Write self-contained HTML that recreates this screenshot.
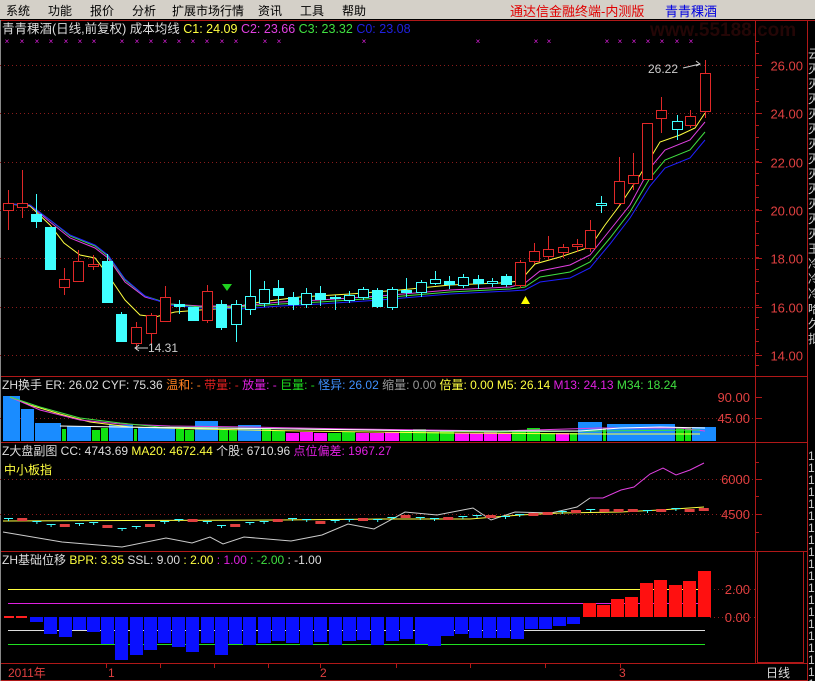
<!DOCTYPE html>
<html><head><meta charset="utf-8">
<style>
html,body{margin:0;padding:0;background:#000;width:815px;height:681px;overflow:hidden}
#menu{position:absolute;left:0;top:0;width:815px;height:19px;background:#d4d0c8;font:12px "Liberation Sans","Noto Sans CJK SC",sans-serif;color:#000}
#menu span{position:absolute;top:2px}
svg{position:absolute;left:0;top:0}
</style></head><body>
<div id="menu">
<span style="left:6px">系统</span><span style="left:48px">功能</span><span style="left:90px">报价</span><span style="left:132px">分析</span><span style="left:172px">扩展市场行情</span><span style="left:258px">资讯</span><span style="left:300px">工具</span><span style="left:342px">帮助</span>
<span style="left:510px;color:#e00000;font-size:13px;top:1px">通达信金融终端-内测版</span><span style="left:665px;color:#0000e0;font-size:13px;top:1px">青青稞酒</span>
</div>
<svg id="s" width="815" height="681" xmlns="http://www.w3.org/2000/svg" font-family="Liberation Sans, Noto Sans CJK SC, sans-serif" font-size="12">
<rect x="0" y="19" width="815" height="662" fill="#000"/>
<text x="650" y="36" fill="#5a1010" font-size="19" font-weight="bold" opacity="0.4">www.55188.com</text>
<g id="g"></g>
</svg>
<script>
var o='';
function L(x1,y1,x2,y2,c,d){o+='<line x1="'+x1+'" y1="'+y1+'" x2="'+x2+'" y2="'+y2+'" stroke="'+c+'"'+(d?' stroke-dasharray="'+d+'"':'')+'/>';}
function R(x,y,w,h,f,s){o+='<rect x="'+x+'" y="'+y+'" width="'+w+'" height="'+h+'" fill="'+f+'"'+(s?' stroke="'+s+'"':'')+'/>';}
function T(x,y,t,c,a,fs){o+='<text x="'+x+'" y="'+y+'" fill="'+c+'"'+(a?' text-anchor="'+a+'"':'')+(fs?' font-size="'+fs+'"':'')+'>'+t+'</text>';}
function P(pts,c){o+='<polyline fill="none" stroke="'+c+'" points="'+pts+'"/>';}
var red='#b01818';
L(0,20.5,815,20.5,red);L(755.5,20,755.5,663,red);L(807.5,20,807.5,681,red);
L(0,376.5,807,376.5,red);L(0,442.5,807,442.5,red);L(0,551.5,807,551.5,red);L(0,663.5,807,663.5,red);L(0,680.5,807,680.5,red);
L(0.5,20,0.5,681,'#888');
var prices=[26,24,22,20,18,16,14];
prices.forEach(function(p){var y=Math.round(65+(26-p)*24.15)+.5;L(0,y,755,y,'#8a1c1c','1 3');L(755,y,762,y,red);T(803,y+5,p.toFixed(2),'#e04040','end',13);});
for(var y=41;y<376;y+=12){L(755,y+.5,759,y+.5,red);}
var rc='云灭灭灭灭灭灭灭灭灭灭灭灭王冷冷冷哈久扣';for(var i=0;i<rc.length;i++)T(808,58+i*15,rc[i],'#ccc',null,12);
for(var i=0;i<20;i++)T(808,460+i*12,'1','#ccc',null,12);
o+='<text x="2" y="33" font-size="12.5"><tspan fill="#ddd">青青稞酒(日线,前复权) 成本均线 </tspan><tspan fill="#ffff40">C1: 24.09 </tspan><tspan fill="#e040e0">C2: 23.66 </tspan><tspan fill="#40e040">C3: 23.32 </tspan><tspan fill="#2020e0">C0: 23.08</tspan></text>';
[7,22,37,51,66,80,94,122,137,151,165,179,193,207,222,236,265,279,364,478,536,549,607,620,634,648,662,677,691].forEach(function(x){o+='<text x="'+x+'" y="44" fill="#e020e0" font-size="8" text-anchor="middle">×</text>';});
P('8,204 30,206 50,225 64,243 80,255 95,258 108,275 125,300 140,315 155,317 175,312 200,310 230,308 260,302 300,297 350,294 400,290 450,285 500,283 520,281 535,264 560,257 590,247 605,225 620,205 640,175 660,142 680,135 695,128 705,113','#ffff40');
P('8,204 30,205 50,222 70,238 95,248 108,258 125,282 145,297 170,304 200,306 240,306 280,302 320,300 380,296 450,290 510,287 525,283 540,271 570,265 590,255 610,230 630,205 650,168 665,150 690,140 705,122','#e040e0');
P('8,204 30,205 50,220 70,236 95,246 108,256 125,280 145,296 170,304 200,307 240,307 280,304 320,302 380,298 450,292 510,289 525,287 540,277 570,272 590,262 610,238 630,212 650,178 665,160 690,150 705,132','#40e040');
P('8,204 30,205 50,220 70,235 95,245 108,255 125,279 145,296 170,305 200,308 240,309 280,306 320,304 380,300 450,294 510,291 525,290 540,282 570,278 590,268 610,244 630,218 650,186 665,168 690,158 705,140','#2020ff');
var C=[[8,203,210,190,230,'r'],[22,203,207,170,218,'r'],[36,214,222,194,228,'c'],[50,227,270,227,270,'c'],[64,279,287,268,295,'r'],[78,261,281,250,281,'r'],[93,264,266,255,270,'r'],[107,261,303,254,303,'c'],[121,314,342,312,342,'c'],[136,327,343,322,350,'r'],[151,315,333,313,345,'r'],[165,297,321,286,322,'r'],[179,304,307,300,314,'c'],[193,307,321,307,321,'c'],[207,291,320,285,323,'r'],[221,304,328,300,330,'c'],[236,304,324,300,342,'h'],[250,296,309,270,315,'h'],[264,289,303,281,307,'h'],[278,288,296,280,305,'c'],[293,297,305,292,310,'c'],[306,293,304,288,308,'h'],[320,293,300,286,306,'c'],[335,297,299,295,310,'c'],[349,295,300,291,303,'h'],[363,289,297,287,300,'h'],[377,290,307,288,308,'c'],[392,289,307,287,310,'h'],[406,290,293,278,297,'c'],[421,282,292,280,297,'h'],[435,279,283,271,285,'h'],[449,281,285,276,289,'c'],[463,277,285,274,288,'h'],[478,279,284,275,289,'c'],[492,281,283,278,287,'h'],[506,276,285,274,287,'c'],[520,262,285,260,288,'r'],[534,251,261,243,264,'r'],[548,249,256,236,260,'r'],[563,247,252,244,258,'r'],[577,244,246,239,252,'r'],[590,230,248,220,252,'r'],[601,203,205,196,213,'h'],[619,181,203,157,205,'r'],[633,175,183,153,190,'r'],[647,123,179,123,179,'r'],[661,110,118,97,133,'r'],[677,121,129,115,140,'h'],[690,116,125,110,128,'r'],[705,73,111,60,118,'r']];
C.forEach(function(c){var x=c[0],col=c[5]=='r'?'#e02828':'#40ffff';L(x+.5,c[3],x+.5,c[4],col);var h=Math.max(1,c[2]-c[1]);
 if(c[5]=='c')R(x-5,c[1],11,h,'#40ffff');else R(x-5+.5,c[1]+.5,10,h,'#000',col);});
T(648,73,'26.22','#ccc',null,12);P('683,68 700,64','#ccc');P('696,61 700,64 696,66','#ccc');
T(148,352,'14.31','#ccc',null,12);P('135,348 148,348','#ccc');P('139,345 135,348 139,351','#ccc');
o+='<polygon points="222,284 232,284 227,291" fill="#20d020"/><polygon points="521,304 530,304 525.5,296" fill="#ffff00"/>';
o+='<text x="2" y="389" font-size="12"><tspan fill="#ddd">ZH换手 ER: 26.02 CYF: 75.36 </tspan><tspan fill="#ff8020">温和: - </tspan><tspan fill="#e02020">带量: - </tspan><tspan fill="#e020e0">放量: - </tspan><tspan fill="#20e020">巨量: - </tspan><tspan fill="#4090ff">怪异: 26.02 </tspan><tspan fill="#999">缩量: 0.00 </tspan><tspan fill="#ffff40">倍量: 0.00 </tspan><tspan fill="#ffff40">M5: 26.14 </tspan><tspan fill="#e020e0">M13: 24.13 </tspan><tspan fill="#40e040">M34: 18.24</tspan></text>';
L(0,418.5,755,418.5,'#8a1c1c','1 3');L(755,397.5,762,397.5,red);L(755,418.5,762,418.5,red);
T(750,402,'90.00','#e04040','end',13);T(750,423,'45.00','#e04040','end',13);
var B='#1a8cff',G='#10e010',M='#ff10ff';
var V=[[3,21,396,B],[21,35,409,B],[35,62,423,B],[62,67,429,G],[67,92,426,B],[92,101,430,G],[101,109,428,G],[109,134,425,B],[134,138,429,G],[138,176,427,B],[176,185,429,G],[185,195,430,G],[195,219,421,B],[219,229,430,G],[229,238,430,G],[238,262,425,B],[262,272,429,G],[272,286,431,G],[286,300,433,M],[300,314,432,M],[314,328,433,M],[328,342,433,G],[342,356,432,G],[356,370,433,M],[370,385,433,M],[385,400,432,M],[400,413,431,G],[413,427,429,G],[427,440,432,G],[440,455,431,G],[455,470,433,M],[470,484,433,M],[484,498,432,M],[498,512,433,M],[512,527,431,G],[527,541,428,G],[541,556,433,G],[556,570,433,M],[570,578,433,G],[578,603,422,B],[603,607,428,G],[607,676,424,B],[676,685,428,G],[685,692,428,G],[692,717,427,B]];
V.forEach(function(v){R(v[0],v[2],v[1]-v[0]-1,441-v[2],v[3]);});
P('10,397 30,405 60,414 90,422 130,427 200,429 300,431 450,433 600,434 700,434','#ffff40');
P('10,397 40,410 80,420 120,424 170,426 250,427 350,429 500,431 600,428 680,428 705,431','#e040e0');
P('10,397 40,407 80,418 120,423 160,427 230,428 350,430 500,432 600,431 700,430','#40e040');
P('60,426 120,427 200,428 300,429 440,431 580,431 620,428 660,427 705,428','#ffffff');
o+='<text x="2" y="455" font-size="12"><tspan fill="#ddd">Z大盘副图 CC: 4743.69 </tspan><tspan fill="#ffff40">MA20: 4672.44 </tspan><tspan fill="#ddd">个股: 6710.96 </tspan><tspan fill="#e020e0">点位偏差: 1967.27</tspan></text>';
T(4,474,'中小板指','#ffff40',null,12);
L(0,479.5,755,479.5,'#8a1c1c','1 3');L(0,514.5,755,514.5,'#8a1c1c','1 3');
L(755,479.5,762,479.5,red);L(755,514.5,762,514.5,red);L(755,496.5,759,496.5,red);L(755,462.5,759,462.5,red);L(755,532.5,759,532.5,red);
T(750,484,'6000','#e04040','end',13);T(750,519,'4500','#e04040','end',13);
P('3,532 62,542 122,547 166,538 192,543 210,537 223,544 244,537 291,541 322,535 348,524 374,529 405,512 437,515 473,508 491,520 515,512 551,513 577,507 590,498','#ccc');
P('590,498 603,498 621,490 634,487 650,474 663,468 676,475 690,470 704,463','#e040e0');
P('3,521 280,520 385,519 470,519 520,515 560,513 620,512 660,510 704,507','#ffff40');
var iy=[518,518,521,524,524,523,522,525,528,526,524,521,519,519,521,525,524,522,521,519,518,519,521,520,519,518,519,517,515,517,518,517,516,515,515,516,514,513,512,511,510,509,509,509,509,510,509,508,509,508];
iy.forEach(function(y,i){var x=8+i*14.2,rd=(i%3==1||i>36&&i%2==0);if(rd)R(x-5,y,10,3,'#e04040');else{L(x-4,y+.5,x+5,y+.5,'#40ffff');L(x+.5,y,x+.5,y+3,'#40ffff');}});
o+='<text x="2" y="564" font-size="12"><tspan fill="#ddd">ZH基础位移 </tspan><tspan fill="#ffff40">BPR: 3.35 </tspan><tspan fill="#ddd">   SSL: 9.00 </tspan><tspan fill="#ffff40">: 2.00 </tspan><tspan fill="#e020e0">: 1.00 </tspan><tspan fill="#40e040">: -2.00 </tspan><tspan fill="#ddd">: -1.00</tspan></text>';
L(8,589.5,705,589.5,'#ffff40');L(8,603.5,705,603.5,'#e020e0');L(8,630.5,705,630.5,'#ddd');L(8,644.5,705,644.5,'#20e020');
L(710,589.5,755,589.5,'#8a1c1c','1 3');L(710,617.5,755,617.5,'#8a1c1c','1 3');
R(757.5,551.5,46,111,'none',red);
T(750,594,'2.00','#e04040','end',13);T(750,622,'0.00','#e04040','end',13);
var bb=[[30,622],[44,634],[59,637],[73,630],[87,632],[101,644],[115,660],[130,655],[144,650],[158,643],[172,647],[186,652],[201,643],[215,655],[229,644],[243,645],[258,643],[272,641],[286,643],[300,645],[314,642],[329,645],[343,641],[357,640],[371,645],[386,641],[400,639],[415,644],[428,646],[441,636],[455,634],[469,638],[483,638],[497,638],[511,639],[525,629],[539,629],[553,626],[567,624]];
bb.forEach(function(b){R(b[0],617,13,b[1]-617,'#0a10ff');});
var rb=[[583,603],[597,605],[611,599],[625,597],[640,583],[654,580],[669,585],[683,581],[698,571]];
rb.forEach(function(b){R(b[0],b[1],13,617-b[1],'#ff1010');});
R(4,616,10,2,'#ff2020');R(16,616,11,2,'#ff2020');
T(8,677,'2011年','#e04040',null,12);T(108,677,'1','#e04040',null,12);T(320,677,'2','#e04040',null,12);T(619,677,'3','#e04040',null,12);T(766,677,'日线','#ddd',null,12);
[106,160,214,268,320,396,470,545,620].forEach(function(x){L(x+.5,664,x+.5,668,red);});
document.getElementById('g').innerHTML=o;
</script>
</body></html>
